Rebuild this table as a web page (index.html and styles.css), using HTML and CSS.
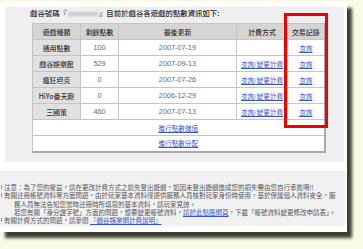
FILE: index.html
```html
<!DOCTYPE html>
<html lang="zh-Hant">
<head>
<meta charset="utf-8">
<link rel="stylesheet" href="styles.css">
</head>
<body>
<div class="window">
  <div class="panel">
    <div class="title">戲谷號碼『<span class="mask"></span>』目前於戲谷各遊戲的點數資訊如下:</div>
    <table class="points">
      <colgroup>
        <col class="c1"><col class="c2"><col class="c3"><col class="c4"><col class="c5">
      </colgroup>
      <tr class="head"><th>遊戲種類</th><th>剩餘點數</th><th>最後更新</th><th>計費方式</th><th>交易記錄</th></tr>
      <tr><th class="game">通用點數</th><td>100</td><td>2007-07-19</td><td></td><td><a href="#">查詢</a></td></tr>
      <tr><th class="game">戲谷娛樂館</th><td>529</td><td>2007-09-13</td><td><a href="#">查詢/變更計費</a></td><td><a href="#">查詢</a></td></tr>
      <tr><th class="game">瘋狂坦克</th><td>0</td><td>2007-07-26</td><td><a href="#">查詢/變更計費</a></td><td><a href="#">查詢</a></td></tr>
      <tr><th class="game">HiYo番天跑</th><td>0</td><td>2006-12-29</td><td><a href="#">查詢/變更計費</a></td><td><a href="#">查詢</a></td></tr>
      <tr><th class="game">三國策</th><td>460</td><td>2007-07-13</td><td><a href="#">查詢/變更計費</a></td><td><a href="#">查詢</a></td></tr>
      <tr><td colspan="5"><a href="#">進行點數儲值</a></td></tr>
      <tr><td colspan="5"><a href="#">進行點數分配</a></td></tr>
    </table>
  </div>
  <div class="notes">
    <p class="bullet">注意：為了您的權益，請在更改計費方式之前先登出遊戲，如因未登出遊戲造成您的損失需由您自行承擔唷!!</p>
    <p class="bullet wrap">有關註冊帳號資料等方面問題，由於玩家基本資料僅提供服務人員核對玩家身份時使用，基於保護個人資料安全，服務人員無法告知您當時註冊時所填寫的基本資料，請玩家見諒。</p>
    <p class="indent">若您有關「身分證字號」方面的問題，想要變更帳號資料，<a href="#">請於此點選網頁</a>，下載「帳號資料變更修改申請表」。</p>
    <p class="bullet">有關計費方式的問題，請參閱 <a href="#">『戲谷娛樂網計費說明』</a></p>
  </div>
  <div class="highlight"></div>
</div>
</body>
</html>
```
FILE: styles.css
```css
html, body {
  margin: 0;
  padding: 0;
}
body {
  background: #f9fbe4;
  width: 363px;
  height: 249px;
  overflow: hidden;
  font-family: "Liberation Sans", "Noto Sans CJK TC", sans-serif;
}
.window {
  position: relative;
  margin-top: 2px;
  width: 347px;
  height: 230px;
  background: #ffffff;
  box-shadow: 5px 6px 3px rgba(45, 45, 35, 0.92);
  display: flex;
  flex-direction: column;
}
.panel {
  margin: 5px 3px 0 5px;
  height: 155px;
  background: #efefef;
  padding-left: 25px;
  box-sizing: border-box;
}
.title {
  height: 12px;
  line-height: 12px;
  font-size: 7.4px;
  color: #2a2a2a;
  font-family: "Noto Sans CJK TC", sans-serif;
  font-weight: 500;
  margin-bottom: 4px;
  white-space: nowrap;
}
.mask {
  display: inline-block;
  width: 30px;
  height: 4px;
  background: #c8c8c8;
  filter: blur(1.2px);
  vertical-align: middle;
  margin: 0 1px;
}
.points {
  margin-left: 2px;
  width: 292px;
  border-collapse: collapse;
  table-layout: fixed;
  background: #ffffff;
  border-right: 2px solid #a9a9a9;
  border-bottom: 2px solid #a9a9a9;
}
.c1 { width: 48px; }
.c2 { width: 38px; }
.c3 { width: 118px; }
.c4 { width: 51px; }
.c5 { width: 37px; }
.points tr {
  height: 16px;
}
.points th, .points td {
  border: 1px solid #c4c4c4;
  padding: 0;
  text-align: center;
  vertical-align: middle;
  white-space: nowrap;
  overflow: hidden;
}
.points th {
  font-family: "Noto Sans CJK TC", sans-serif;
  font-weight: 500;
  font-size: 6.9px;
  color: #333;
}
.points .head th {
  background: #d5d5d5;
}
.points th.game {
  background: #e1e1e1;
}
.points td {
  font-size: 7.3px;
  color: #6a6a6a;
}
.points a {
  font-family: "Noto Sans CJK TC", sans-serif;
  font-size: 6.6px;
  color: #3a55c8;
  text-decoration: underline;
}
.notes {
  margin-top: 9px;
  width: 345px;
  height: 55px;
  background: #f1f1f1;
  padding-top: 12px;
  box-sizing: border-box;
  overflow: hidden;
  font-family: "Noto Sans CJK TC", sans-serif;
  font-size: 6.5px;
  color: #555;
}
.notes p {
  margin: 0;
  line-height: 8.3px;
  white-space: nowrap;
  padding-left: 4px;
  position: relative;
}
.notes p.wrap {
  white-space: normal;
  padding-left: 14px;
  padding-right: 5px;
  text-indent: -10px;
}
.notes p.indent {
  padding-left: 14px;
}
.notes p.bullet::before {
  content: "";
  position: absolute;
  left: 1px;
  top: 2px;
  width: 1px;
  height: 4px;
  background: #9a9a9a;
}
.notes a {
  color: #3a55c8;
  text-decoration: underline;
}
.highlight {
  position: absolute;
  left: 284px;
  top: 11px;
  width: 44px;
  height: 115px;
  box-sizing: border-box;
  border: 3px solid #f00000;
}
```
